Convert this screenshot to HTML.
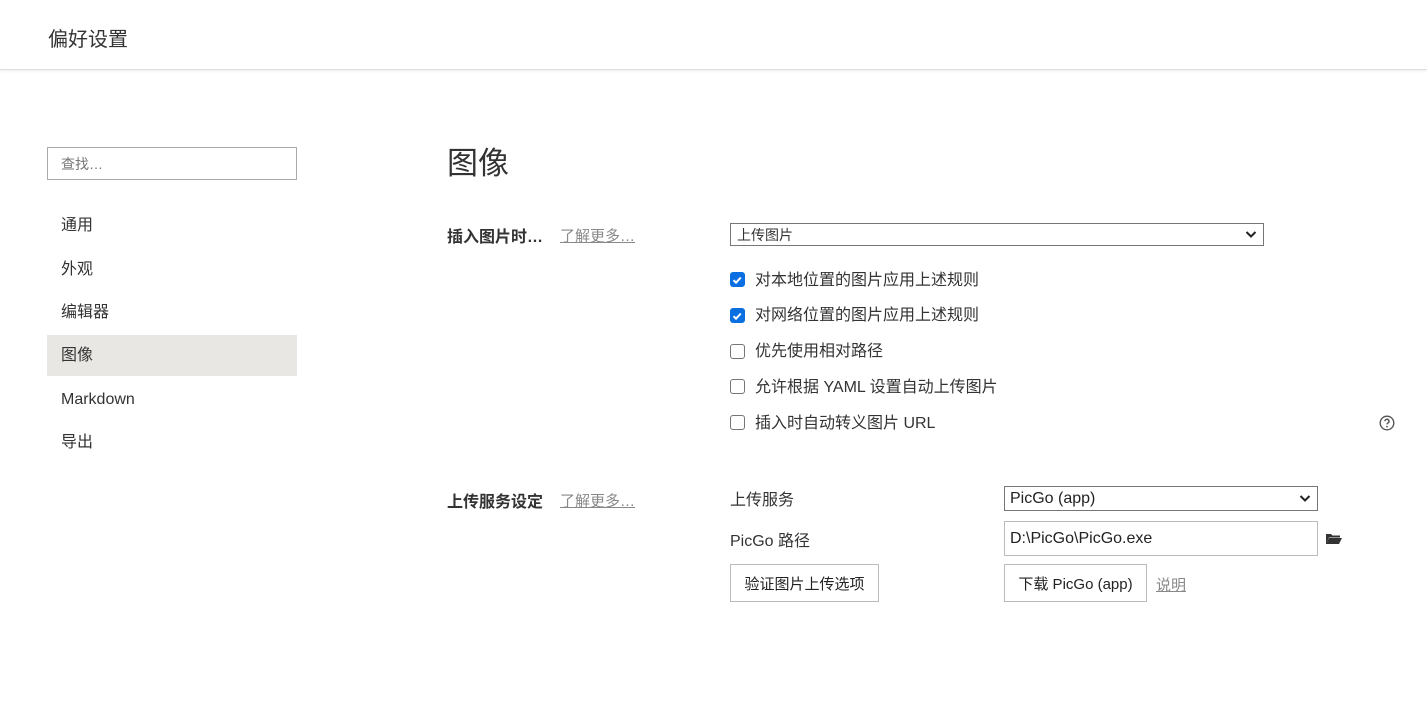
<!DOCTYPE html>
<html><head><meta charset="utf-8"><style>
*{box-sizing:border-box;margin:0;padding:0}
body{width:1427px;height:723px;background:#fff;font-family:"Liberation Sans","Noto Sans CJK SC",sans-serif;color:#333;position:relative;overflow:hidden;font-size:15px}
.a{position:absolute;white-space:nowrap}
.hdr{position:absolute;left:0;top:0;width:1427px;height:70px;border-bottom:1px solid #ddd;box-shadow:0 1px 3px rgba(0,0,0,.08)}
.nav{position:absolute;left:47px;width:250px;height:41px;padding-left:14px;line-height:41px;font-size:16px}
.cb{position:absolute;left:730px;width:15px;height:15px;border:1.5px solid #767676;border-radius:3px;background:#fff}
.cb.on{background:#0a6fe0;border-color:#0a6fe0}
.lbl{position:absolute;left:755px;font-size:16px;line-height:18px;white-space:nowrap}
.link{color:#888;text-decoration:underline;font-size:15px}
.box{position:absolute;border:1px solid #bbb;background:#fff;font-size:15px;white-space:nowrap}
</style></head><body>
<div class="hdr"></div>
<div class="a" style="left:48px;top:23px;font-size:20px;color:#333">偏好设置</div>
<div class="box" style="left:47px;top:147px;width:250px;height:33px;border-color:#aaa;padding:6px 13px;color:#777;font-size:14px">查找…</div>
<div class="nav" style="top:205px">通用</div>
<div class="nav" style="top:249px">外观</div>
<div class="nav" style="top:292px">编辑器</div>
<div class="nav" style="top:335px;background:#e8e7e4">图像</div>
<div class="nav" style="top:379px">Markdown</div>
<div class="nav" style="top:422px">导出</div>
<div class="a" style="left:447px;top:138px;font-size:31px;color:#333">图像</div>
<div class="a" style="left:447px;top:223px;font-weight:bold;font-size:16px">插入图片时…</div>
<div class="a link" style="left:560px;top:225px">了解更多…</div>
<div class="box" style="left:730px;top:223px;width:534px;height:23px;border-color:#767676;padding:1px 6px;font-size:14px">上传图片
<svg style="position:absolute;right:6px;top:6px" width="12" height="9" viewBox="0 0 12 9"><path d="M1.5 2l4.5 4.5 4.5-4.5" fill="none" stroke="#222" stroke-width="2"/></svg></div>
<div class="cb on" style="top:272px"><svg width="12" height="12" viewBox="0 0 12 12"><path d="M2.5 6.2l2.5 2.5 4.8-5.2" fill="none" stroke="#fff" stroke-width="2"/></svg></div>
<div class="lbl" style="top:272px">对本地位置的图片应用上述规则</div>
<div class="cb on" style="top:308px"><svg width="12" height="12" viewBox="0 0 12 12"><path d="M2.5 6.2l2.5 2.5 4.8-5.2" fill="none" stroke="#fff" stroke-width="2"/></svg></div>
<div class="lbl" style="top:307px">对网络位置的图片应用上述规则</div>
<div class="cb" style="top:344px"></div>
<div class="lbl" style="top:343px">优先使用相对路径</div>
<div class="cb" style="top:379px"></div>
<div class="lbl" style="top:379px">允许根据 YAML 设置自动上传图片</div>
<div class="cb" style="top:415px"></div>
<div class="lbl" style="top:415px">插入时自动转义图片 URL</div>
<svg class="a" style="left:1379px;top:415px" width="16" height="16" viewBox="0 0 16 16"><circle cx="8" cy="8" r="6.8" fill="none" stroke="#555" stroke-width="1.4"/><path d="M6 6.3a2 2 0 1 1 2.8 1.8c-.6.3-.8.7-.8 1.3" fill="none" stroke="#555" stroke-width="1.4"/><circle cx="8" cy="11.6" r=".9" fill="#555"/></svg>
<div class="a" style="left:447px;top:488px;font-weight:bold;font-size:16px">上传服务设定</div>
<div class="a link" style="left:560px;top:490px">了解更多…</div>
<div class="a" style="left:730px;top:486px;font-size:16px">上传服务</div>
<div class="box" style="left:1004px;top:486px;width:314px;height:25px;border-color:#767676;padding:3px 5px;color:#222;font-size:16px">PicGo (app)
<svg style="position:absolute;right:6px;top:7px" width="12" height="9" viewBox="0 0 12 9"><path d="M1.5 2l4.5 4.5 4.5-4.5" fill="none" stroke="#222" stroke-width="2"/></svg></div>
<div class="a" style="left:730px;top:527px;font-size:16px">PicGo 路径</div>
<div class="box" style="left:1004px;top:521px;width:314px;height:35px;padding:8px 5px;color:#222;font-size:16px">D:\PicGo\PicGo.exe</div>
<svg class="a" style="left:1326px;top:533px" width="16" height="12" viewBox="0 0 16 12"><path d="M0 1h5l1.5 1.5H14v2H3L0 11z M3 5h13l-3 6H0z" fill="#333"/></svg>
<div class="box" style="left:730px;top:564px;width:149px;height:38px;padding:8px 0;text-align:center;font-size:15px;color:#222">验证图片上传选项</div>
<div class="box" style="left:1004px;top:564px;width:143px;height:38px;padding:8px 0;text-align:center;color:#222;font-size:15px">下载 PicGo (app)</div>
<div class="a link" style="left:1156px;top:574px">说明</div>
</body></html>
